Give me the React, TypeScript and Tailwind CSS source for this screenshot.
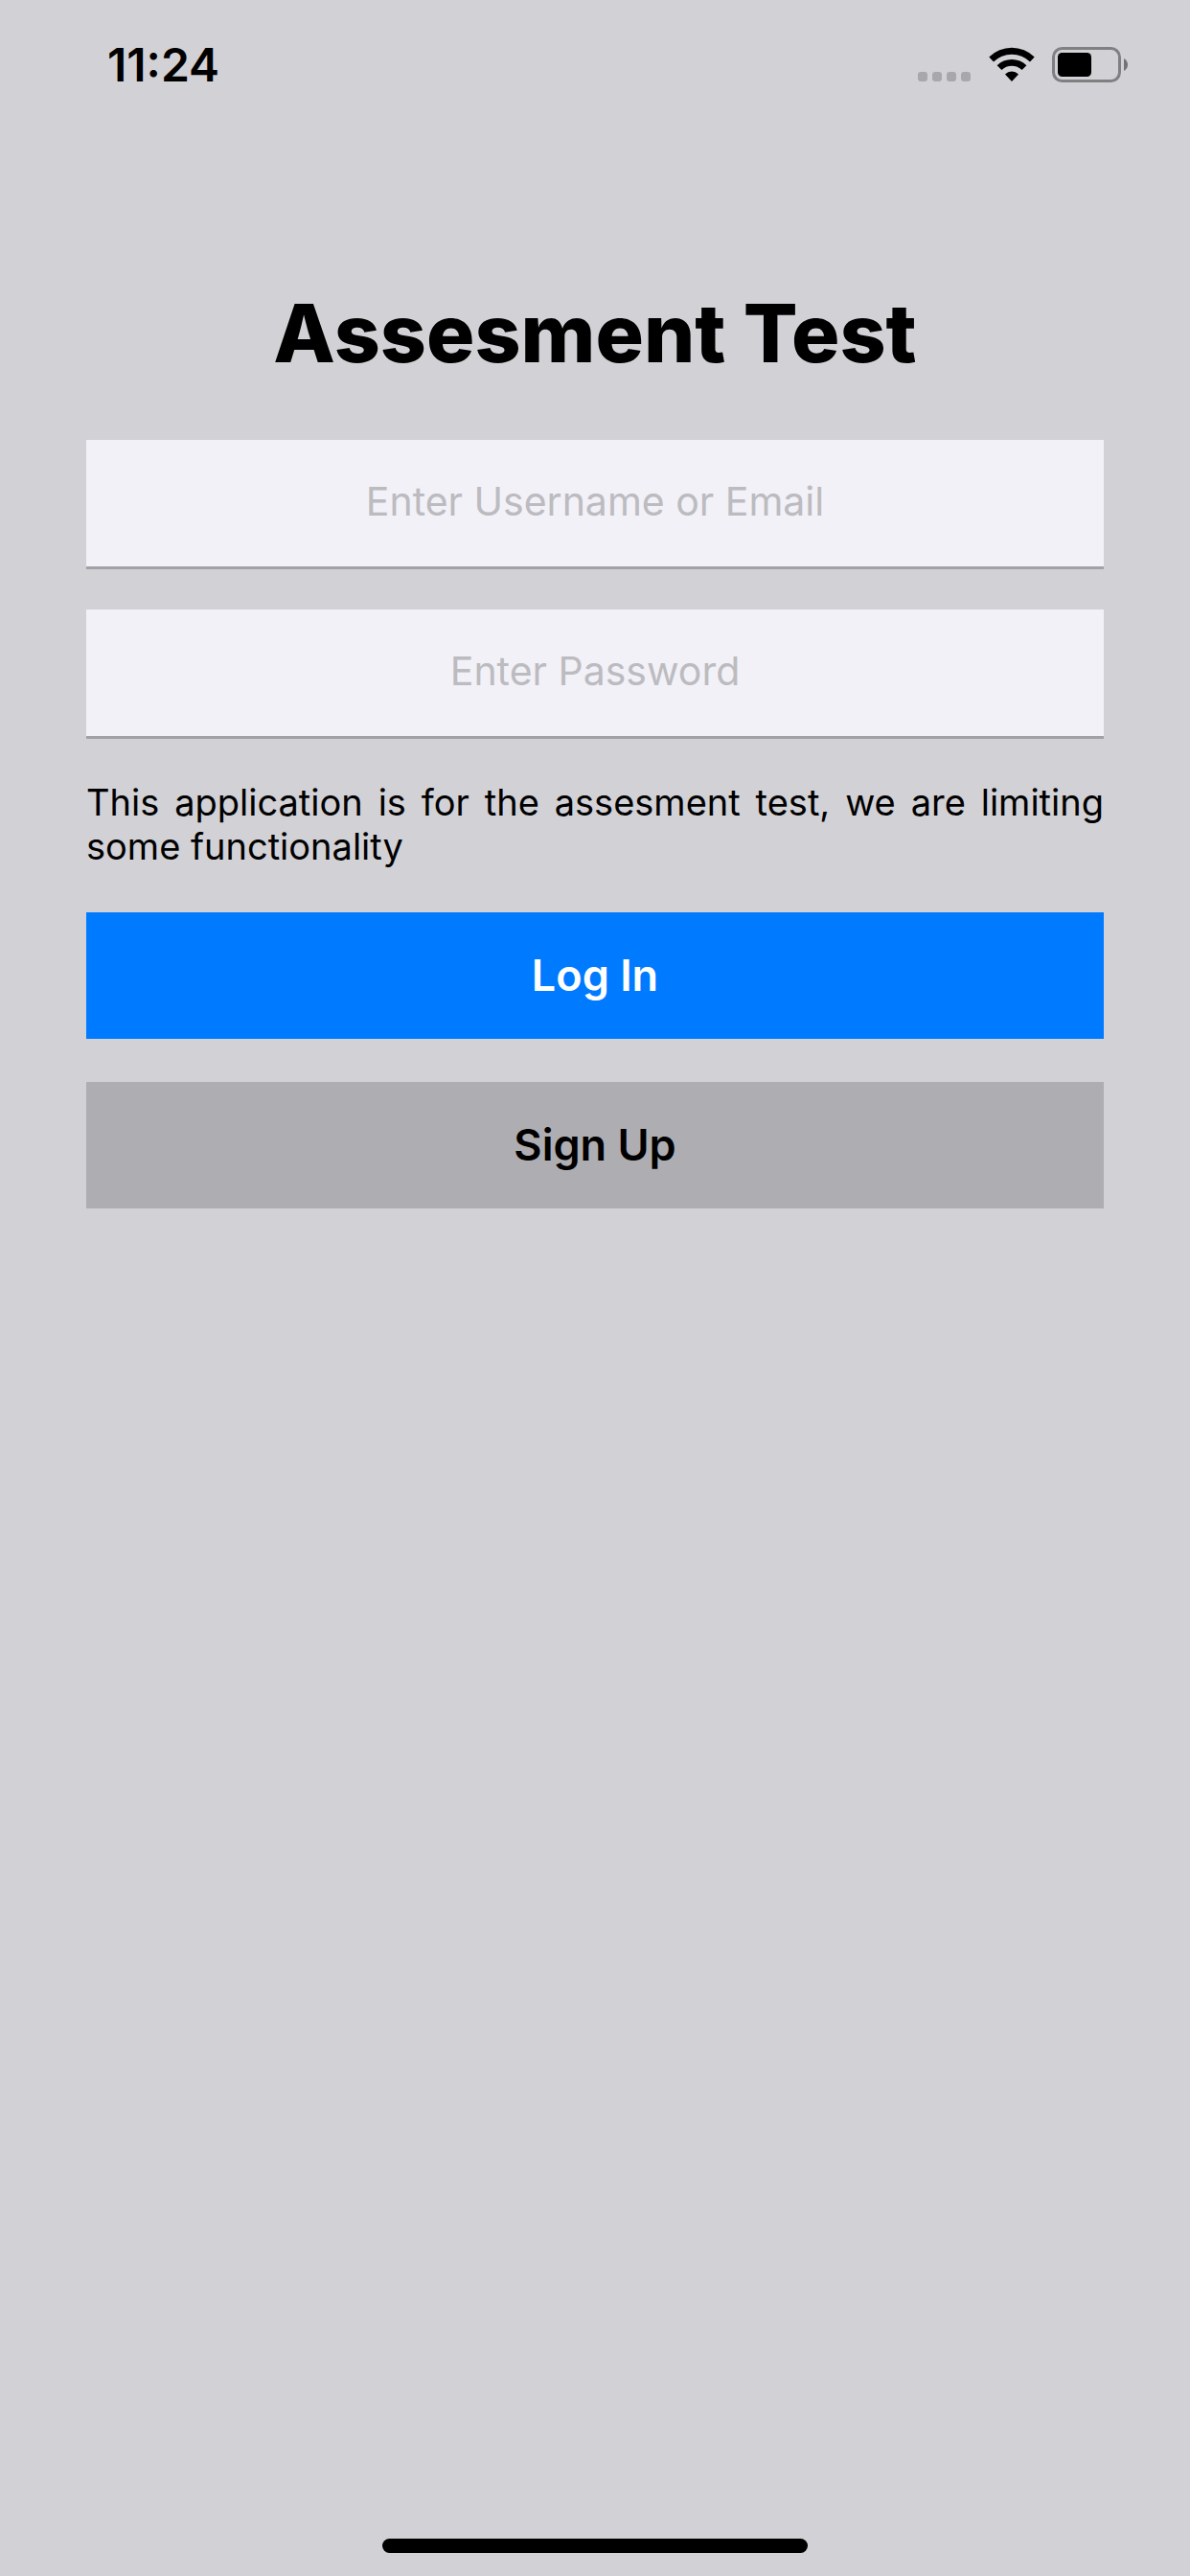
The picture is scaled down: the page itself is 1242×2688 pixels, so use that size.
import React from "react";

function WifiIcon() {
  return (
    <svg width="48" height="36" viewBox="0 0 48 36" fill="#000" aria-label="Wi-Fi" role="img">
      <path d="M0.3 10.6A33.5 33.5 0 0 1 47.7 10.6L43 15.5A27 27 0 0 0 5 15.5Z" />
      <path d="M8.6 19.2A22 22 0 0 1 39.4 19.2L34.6 24A15.4 15.4 0 0 0 13.4 24Z" />
      <path d="M17 28.4A10 10 0 0 1 31 28.4L24 36Z" />
    </svg>
  );
}

function BatteryIcon() {
  return (
    <svg width="80" height="37" viewBox="0 0 80 37" aria-label="Battery" role="img">
      <rect x="1.5" y="1.5" width="69" height="34" rx="9" fill="none" stroke="#808082" strokeWidth="3" />
      <rect x="6" y="6" width="35" height="25" rx="4.5" fill="#000" />
      <path d="M75 12Q79 14.5 79 18.5T75 25Z" fill="#737375" />
    </svg>
  );
}

function StatusBar() {
  return (
    <header className="flex h-[132px] items-start justify-between pl-28 pr-16">
      <time className="mt-11 text-[48px] leading-[48px] font-semibold">11:24</time>
      <div className="mt-[49px] flex items-start">
        <div className="mt-[26px] mr-[19px] flex gap-[5px]">
          <span className="size-[10px] rounded-[3px] bg-[#a8a8ac]" />
          <span className="size-[10px] rounded-[3px] bg-[#a8a8ac]" />
          <span className="size-[10px] rounded-[3px] bg-[#a8a8ac]" />
          <span className="size-[10px] rounded-[3px] bg-[#a8a8ac]" />
        </div>
        <div className="mr-[18px]">
          <WifiIcon />
        </div>
        <BatteryIcon />
      </div>
    </header>
  );
}

function Field({ id, label, type, autoComplete }: { id: string; label: string; type: string; autoComplete: string }) {
  return (
    <input
      id={id}
      name={id}
      type={type}
      aria-label={label}
      placeholder={label}
      autoComplete={autoComplete}
      className="block h-[132px] w-full rounded-none bg-[#f2f1f7] pb-1 text-center text-[41px] text-black shadow-[0_3px_0_#a1a1a6] outline-none placeholder:text-[#bcbbc0]"
    />
  );
}

export default function App() {
  return (
    <div className="flex min-h-screen flex-col bg-[#d2d1d6] font-['Inter',sans-serif] text-black">
      <StatusBar />
      <main className="flex-1 px-[90px] pt-[150px]">
        <form className="flex flex-col gap-[45px]" onSubmit={(e) => e.preventDefault()}>
          <h1 className="text-center text-[84px] leading-[132px] font-extrabold">Assesment Test</h1>
          <Field id="username" label="Enter Username or Email" type="text" autoComplete="username" />
          <Field id="password" label="Enter Password" type="password" autoComplete="current-password" />
          <p className="py-px text-justify text-[38px] leading-[46px]">
            This application is for the assesment test, we are limiting some functionality
          </p>
          <button type="submit" className="h-[132px] bg-[#007aff] text-[45px] font-semibold text-white">
            Log In
          </button>
          <button type="button" className="h-[132px] bg-[#aeadb2] text-[45px] font-semibold">
            Sign Up
          </button>
        </form>
      </main>
      <div className="mb-6 h-[15px] w-[444px] self-center rounded-full bg-black" />
    </div>
  );
}
